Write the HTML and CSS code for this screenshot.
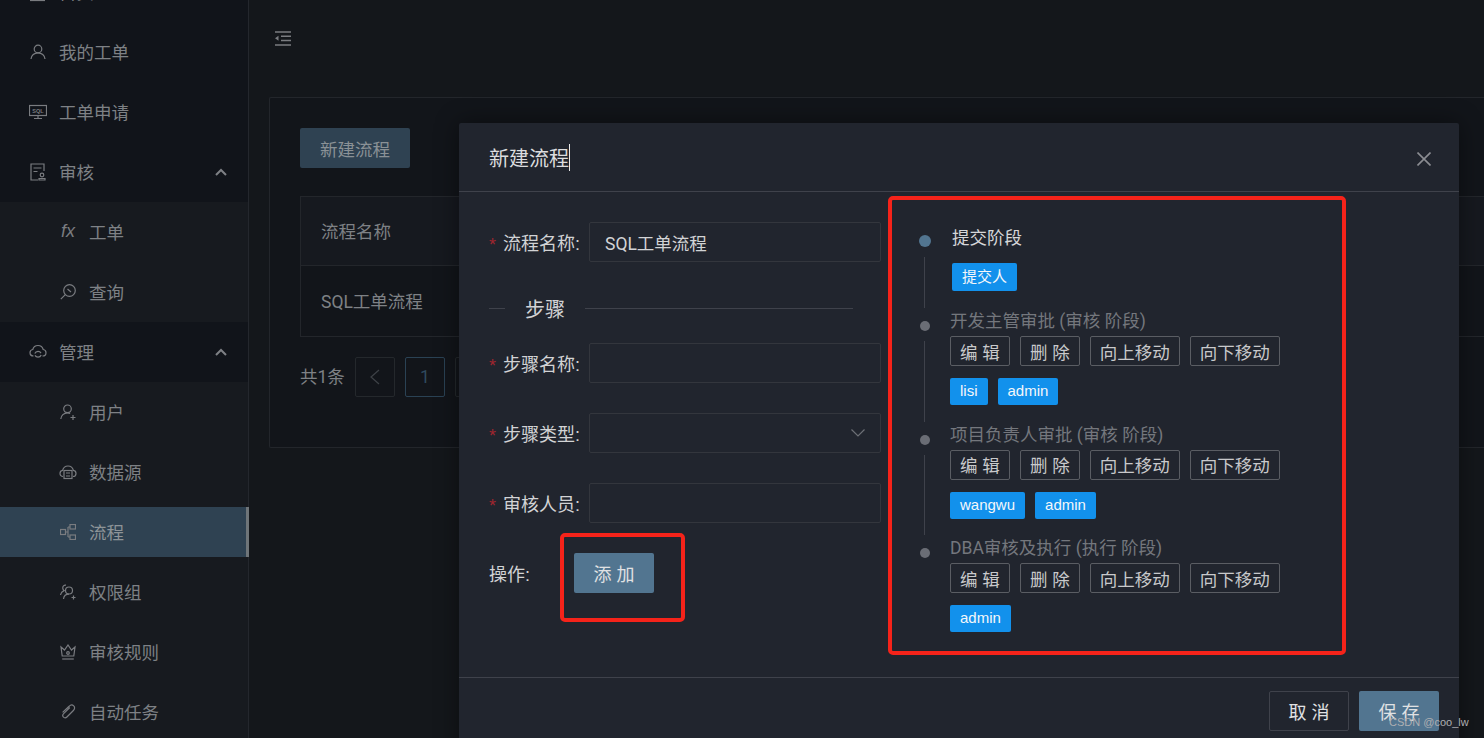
FILE: index.html
```html
<!DOCTYPE html>
<html lang="zh-CN">
<head>
  <meta charset="UTF-8">
  <title>新建流程</title>
  <link rel="stylesheet" href="styles.css">
</head>
<body>
  <div class="app">
    <aside class="sidebar">
      <nav class="menu">
        <a class="menu-item">
          <svg class="icon icon-clip" viewBox="0 0 16 20"><path d="M0 18.500h15"/></svg>
          首页
        </a>
        <a class="menu-item">
          <svg class="icon" viewBox="0 0 16 16"><circle cx="8" cy="5" r="3.800"/><path d="M1 15c.3-3.600 3.300-6.200 7-6.200s6.700 2.600 7 6.200"/></svg>
          我的工单
        </a>
        <a class="menu-item">
          <svg class="icon icon-wide" viewBox="0 0 18 14"><rect x=".5" y=".5" width="17" height="10"/><path d="M9 10.500v2.500M5 13.500h8"/><text class="sql-text" x="9" y="7.800">SQL</text></svg>
          工单申请
        </a>
        <a class="menu-item has-arrow">
          <svg class="icon icon-tall" viewBox="0 0 16 18"><path d="M14 8V1H1v16h7"/><path d="M3.500 5h8M3.500 8.500h4"/><circle cx="12" cy="12" r="1.800"/><path d="M9 17v-1.500h6V17z"/></svg>
          审核
          <svg class="arrow" viewBox="0 0 12 8"><path d="M1 7l5-5 5 5"/></svg>
        </a>
        <div class="submenu">
          <a class="menu-item"><span class="fx">fx</span>工单</a>
          <a class="menu-item">
            <svg class="icon" viewBox="0 0 16 16"><circle cx="9.500" cy="6.500" r="5.800"/><path d="M5.300 10.700L.8 15.200M7.500 5l3.500 3"/></svg>
            查询
          </a>
        </div>
        <a class="menu-item has-arrow">
          <svg class="icon icon-wide" viewBox="0 0 18 15"><path d="M4.500 11.500C2.500 11.500 1 10 1 8.200c0-1.600 1.200-3 2.800-3.200C4.400 2.600 6.500 1 9 1s4.600 1.600 5.200 4c1.600.2 2.800 1.600 2.800 3.200 0 1.800-1.500 3.300-3.500 3.300"/><path d="M5.800 9c.5-1.300 1.800-2.200 3.200-2.200 1.300 0 2.400.7 3 1.800M12.200 10.500c-.5 1.300-1.800 2.200-3.200 2.200-1.300 0-2.400-.7-3-1.800"/></svg>
          管理
          <svg class="arrow" viewBox="0 0 12 8"><path d="M1 7l5-5 5 5"/></svg>
        </a>
        <div class="submenu">
          <a class="menu-item">
            <svg class="icon" viewBox="0 0 16 16"><circle cx="7.500" cy="4.800" r="3.800"/><path d="M.8 15c.2-3.500 3.100-6.200 6.700-6.200 1 0 1.900.2 2.700.6M10.500 13.500h5M13 11v5"/></svg>
            用户
          </a>
          <a class="menu-item">
            <svg class="icon icon-wide" viewBox="0 0 18 14"><path d="M4 11.500C2.200 11.500 1 10 1 8.400c0-1.500 1.100-2.800 2.600-3C4.200 3 6.400 1 9 1s4.800 2 5.400 4.400c1.500.2 2.600 1.500 2.600 3 0 1.600-1.200 3.100-3 3.100"/><rect x="5" y="5.500" width="8" height="8"/><path d="M7 8h4M7 11h4"/></svg>
            数据源
          </a>
          <a class="menu-item active">
            <svg class="icon" viewBox="0 0 16 16"><rect x=".5" y="5.500" width="5" height="5"/><rect x="10" y=".5" width="5.500" height="4.500"/><rect x="10" y="11" width="5.500" height="4.500"/><path d="M5.500 8H8M8 3v10M8 3h2M8 13h2"/></svg>
            流程
          </a>
          <a class="menu-item">
            <svg class="icon" viewBox="0 0 16 16"><circle cx="9" cy="6.500" r="3.500"/><path d="M3.500 15c.3-2.800 2.500-4.800 5.500-4.800M11.500 13.500h4M13.500 11.500v4M6 1.200C4 .8 2.500 2.400 2.800 4.400c.1 1 .7 1.800 1.300 2.200C2 7.500.8 9 .5 11"/></svg>
            权限组
          </a>
          <a class="menu-item">
            <svg class="icon" viewBox="0 0 16 16"><path d="M1 3l3.500 3L8 1l3.500 5L15 3l-1.200 9H2.200z"/><path d="M2.200 15h11.600"/><circle cx="8" cy="9" r="1.300"/></svg>
            审核规则
          </a>
          <a class="menu-item">
            <svg class="icon" viewBox="0 0 16 16"><path d="M9.800 3.500L3.600 9.700c-1.100 1.100-1 2.600-.1 3.500s2.300.9 3.400-.2l6.500-6.500c1.600-1.600 1.500-3.500.3-4.600s-3-1.200-4.600.4L2.600 8.400"/></svg>
            自动任务
          </a>
        </div>
      </nav>
    </aside>

    <main class="main">
      <header class="topbar">
        <svg class="collapse" viewBox="0 0 16 15"><path d="M0 1h16M6 5.300h10M6 9.600h10M0 14h16"/><path class="solid" d="M3.500 4.800v5L0 7.300z"/></svg>
      </header>
      <section class="card">
        <button class="btn-new">新建流程</button>
        <div class="table">
          <div class="table-head">流程名称</div>
          <div class="table-row">SQL工单流程</div>
        </div>
        <div class="pager">
          <span class="pager-total">共1条</span>
          <span class="pager-btn"><svg viewBox="0 0 10 16"><path d="M9 1L1 8l8 7"/></svg></span>
          <span class="pager-btn current">1</span>
          <span class="pager-btn"><svg viewBox="0 0 10 16"><path d="M1 1l8 7-8 7"/></svg></span>
        </div>
      </section>
    </main>

    <div class="modal">
      <div class="modal-header">
        <span class="modal-title">新建流程</span>
        <svg class="modal-close" viewBox="0 0 14 14"><path d="M.5.500l13 13M13.500.500l-13 13"/></svg>
      </div>
      <div class="modal-body">
        <form class="flow-form">
          <div class="form-row">
            <label class="form-label"><i>*</i>流程名称:</label>
            <input class="form-input" value="SQL工单流程">
          </div>
          <div class="divider"><span>步骤</span></div>
          <div class="form-row">
            <label class="form-label"><i>*</i>步骤名称:</label>
            <input class="form-input">
          </div>
          <div class="form-row">
            <label class="form-label"><i>*</i>步骤类型:</label>
            <div class="form-input form-select">
              <svg viewBox="0 0 14 8"><path d="M.5.500L7 7l6.500-6.500"/></svg>
            </div>
          </div>
          <div class="form-row">
            <label class="form-label"><i>*</i>审核人员:</label>
            <input class="form-input">
          </div>
          <div class="form-row action-row">
            <label class="form-label plain">操作:</label>
            <button type="button" class="btn btn-primary">添 加</button>
          </div>
        </form>

        <div class="timeline">
          <div class="step first">
            <div class="rail"><span class="dot"></span><span class="rail-line"></span></div>
            <div class="step-content">
              <div class="step-title">提交阶段</div>
              <div class="tags"><span class="tag">提交人</span></div>
            </div>
          </div>
          <div class="step">
            <div class="rail"><span class="dot"></span><span class="rail-line"></span></div>
            <div class="step-content">
              <div class="step-title">开发主管审批 (审核 阶段)</div>
              <div class="step-actions">
                <button class="btn-small">编 辑</button>
                <button class="btn-small">删 除</button>
                <button class="btn-small">向上移动</button>
                <button class="btn-small">向下移动</button>
              </div>
              <div class="tags"><span class="tag">lisi</span><span class="tag">admin</span></div>
            </div>
          </div>
          <div class="step">
            <div class="rail"><span class="dot"></span><span class="rail-line"></span></div>
            <div class="step-content">
              <div class="step-title">项目负责人审批 (审核 阶段)</div>
              <div class="step-actions">
                <button class="btn-small">编 辑</button>
                <button class="btn-small">删 除</button>
                <button class="btn-small">向上移动</button>
                <button class="btn-small">向下移动</button>
              </div>
              <div class="tags"><span class="tag">wangwu</span><span class="tag">admin</span></div>
            </div>
          </div>
          <div class="step">
            <div class="rail"><span class="dot"></span></div>
            <div class="step-content">
              <div class="step-title">DBA审核及执行 (执行 阶段)</div>
              <div class="step-actions">
                <button class="btn-small">编 辑</button>
                <button class="btn-small">删 除</button>
                <button class="btn-small">向上移动</button>
                <button class="btn-small">向下移动</button>
              </div>
              <div class="tags"><span class="tag">admin</span></div>
            </div>
          </div>
        </div>
      </div>
      <div class="modal-footer">
        <button class="btn btn-default">取 消</button>
        <button class="btn btn-primary">保 存</button>
      </div>
    </div>

    <div class="watermarks" id="watermarks"></div>
    <div class="mark mark-add"></div>
    <div class="mark mark-steps"></div>
    <div class="csdn">CSDN @coo_lw</div>
  </div>

  <script>
    const watermarks = document.getElementById("watermarks");
    for (let i = 0; i < 49; i++) {
      const span = document.createElement("span");
      span.textContent = "admin";
      watermarks.appendChild(span);
    }
  </script>
</body>
</html>
```

FILE: styles.css
```css
* {
  box-sizing: border-box;
}

body {
  margin: 0;
  font-family: Roboto, "Noto Sans CJK SC", sans-serif;
  font-size: 17.500px;
  background-color: #12151a;
  color: #7e8185;
}

button,
input {
  font-family: inherit;
}

.app {
  position: relative;
  display: flex;
  width: 100%;
  height: 100vh;
  overflow: hidden;
}

/* sidebar */
.sidebar {
  flex: 0 0 249px;
  background-color: #11141a;
  border-right: 1px solid #24272d;
}

.menu {
  margin-top: -38px;
}

.menu-item {
  display: flex;
  align-items: center;
  gap: 13px;
  height: 60px;
  padding: 0 0 2px 30px;
  color: #7e8185;
}

.icon {
  flex: none;
  width: 16px;
  height: 16px;
  margin-top: 2px;
  fill: none;
  stroke: #7a7c80;
  stroke-width: 1.2;
}

.icon-wide {
  width: 18px;
  margin-left: -1px;
  margin-right: -1px;
}

.icon-tall {
  height: 18px;
}

.icon-clip {
  height: 20px;
}

.sql-text {
  font-family: "Liberation Sans", sans-serif;
  font-size: 5.500px;
  font-weight: bold;
  fill: #7a7c80;
  stroke: none;
  text-anchor: middle;
}

.arrow {
  width: 12px;
  height: 8px;
  margin-top: 2px;
  margin-left: auto;
  margin-right: 21px;
  fill: none;
  stroke: #7e8185;
  stroke-width: 2;
}

.submenu {
  background-color: #171a1f;
}

.submenu .menu-item {
  padding-left: 60px;
}

.fx {
  width: 16px;
  padding-left: 1px;
  font-family: "Liberation Sans", sans-serif;
  font-style: italic;
  font-size: 18px;
  color: #7a7c80;
}

.menu-item.active {
  height: 50px;
  margin: 5px -1px 5px 0;
  background-color: #2f4252;
  border-right: 3px solid #6f7579;
  color: #8d9498;
}

/* page behind the dialog */
.main {
  flex: 1;
  min-width: 0;
  background-color: #14171b;
}

.topbar {
  height: 97px;
  padding: 31px 0 0 26px;
}

.collapse {
  display: block;
  width: 16px;
  height: 15px;
  fill: none;
  stroke: #7a7c80;
  stroke-width: 1.500;
}

.collapse .solid {
  fill: #7a7c80;
  stroke: none;
}

.card {
  height: 351px;
  margin-left: 20px;
  padding: 30px 0 0 30px;
  background-color: #12151a;
  border: 1px solid #23262b;
  border-right: 0;
  border-radius: 2px 0 0 2px;
}

.btn-new {
  display: block;
  width: 110px;
  height: 40px;
  padding: 0;
  background-color: #2f4252;
  border: 0;
  border-radius: 2px;
  color: #8a9196;
  font-size: 17.500px;
}

.table {
  margin-top: 28px;
  border: 1px solid #23262b;
  border-right: 0;
}

.table-head {
  height: 69px;
  padding: 1px 0 0 20px;
  line-height: 69px;
  background-color: #16191f;
  border-bottom: 1px solid #23262b;
}

.table-row {
  height: 70px;
  padding: 1px 0 0 20px;
  line-height: 70px;
}

.pager {
  display: flex;
  align-items: center;
  gap: 10px;
  margin-top: 20px;
}

.pager-total {
  padding-bottom: 4px;
}

.pager-btn {
  display: flex;
  align-items: center;
  justify-content: center;
  width: 40px;
  height: 40px;
  color: #2f4a5e;
  border: 1px solid #24282c;
  border-radius: 2px;
}

.pager-btn svg {
  width: 10px;
  height: 16px;
  fill: none;
  stroke: #3e4247;
  stroke-width: 1.200;
}

.pager-btn.current {
  border-color: #2a4254;
}

/* dialog */
.modal {
  position: absolute;
  left: 459px;
  top: 123px;
  width: 1000px;
  height: 630px;
  background-color: #21252e;
  box-shadow: 0 0 24px rgba(0, 0, 0, 0.45);
  border-radius: 2px;
  color: #d2d3d5;
}

.modal-header {
  display: flex;
  align-items: center;
  justify-content: space-between;
  height: 69px;
  padding: 0 28px 0 30px;
  border-bottom: 1px solid #3f424b;
}

.modal-title {
  display: inline-block;
  height: 27px;
  line-height: 30px;
  font-size: 20px;
  color: #dcdddf;
  border-right: 1px solid #e8e8e8;
}

.modal-close {
  width: 14px;
  height: 14px;
  margin-top: 3px;
  fill: none;
  stroke: #8b8d92;
  stroke-width: 1.600;
}

.modal-body {
  display: flex;
  height: 485px;
  padding: 30px 0 0 30px;
}

.flow-form {
  flex: 0 0 392px;
}

.form-row {
  display: flex;
  align-items: center;
  height: 40px;
  margin-bottom: 30px;
}

.form-label {
  flex: 0 0 100px;
  display: flex;
  align-items: center;
  font-family: "Liberation Sans", "Noto Sans CJK SC", sans-serif;
  font-size: 18px;
  color: #d2d3d5;
}

.form-label i {
  width: 14px;
  padding-top: 6px;
  font-style: normal;
  color: #a0252e;
}

.form-input {
  flex: 1;
  height: 40px;
  min-width: 0;
  padding: 0 15px;
  background: transparent;
  border: 1px solid #33363d;
  border-radius: 2px;
  color: #d2d3d5;
  font-size: 17.500px;
}

.form-select {
  display: flex;
  align-items: center;
  justify-content: flex-end;
}

.form-select svg {
  width: 14px;
  height: 8px;
  fill: none;
  stroke: #6d7076;
  stroke-width: 1.200;
}

.divider {
  display: flex;
  align-items: center;
  width: 364px;
  height: 33px;
  margin-bottom: 18px;
  font-size: 20px;
}

.divider::before,
.divider::after {
  content: "";
  height: 1px;
  background-color: #3f424b;
}

.divider::before {
  flex: 0 0 16px;
}

.divider::after {
  flex: 1;
}

.divider span {
  padding: 0 20px;
}

.action-row .btn {
  margin-left: -15px;
}

.btn {
  width: 80px;
  height: 40px;
  padding: 0;
  border-radius: 2px;
  font-family: "Liberation Sans", "Noto Sans CJK SC", sans-serif;
  font-size: 18px;
  color: #e0e1e3;
}

.btn-primary {
  background-color: #527590;
  border: 0;
}

.btn-default {
  background: transparent;
  border: 1px solid #3f424b;
}

.modal-footer {
  display: flex;
  justify-content: flex-end;
  gap: 10px;
  padding: 13px 20px;
  border-top: 1px solid #3f424b;
}

.timeline {
  margin-left: 38px;
  padding-top: 3px;
}

.step {
  display: flex;
  gap: 19px;
  padding-bottom: 16.500px;
}

.step.first {
  gap: 21px;
  padding-bottom: 17px;
}

.rail {
  display: flex;
  flex-direction: column;
  width: 12px;
  margin-bottom: -16.500px;
}

.dot {
  width: 10px;
  height: 10px;
  margin: 13px 0 10px 1px;
  border-radius: 50%;
  background-color: #6a6d75;
}

.first .dot {
  width: 12px;
  height: 12px;
  margin: 10px 0 10px 0;
  background-color: #527590;
}

.rail-line {
  flex: 1;
  width: 1px;
  margin-left: 5px;
  background-color: #3f424b;
}

.step-title {
  height: 28px;
  line-height: 27px;
  white-space: nowrap;
  color: #74777d;
}

.first .step-title {
  height: 38px;
  line-height: 27px;
  color: #d6d7d9;
}

.step-actions {
  display: flex;
  gap: 10px;
  margin-bottom: 12px;
}

.btn-small {
  height: 30px;
  padding: 0 9px;
  background: transparent;
  border: 1px solid #5a5d63;
  border-radius: 2px;
  font-family: "Liberation Sans", "Noto Sans CJK SC", sans-serif;
  font-size: 17.500px;
  color: #c8c9cb;
  white-space: nowrap;
}

.tags {
  display: flex;
  gap: 10px;
}

.tag {
  height: 27px;
  padding: 0 10px;
  line-height: 26px;
  font-family: "Liberation Sans", "Noto Sans CJK SC", sans-serif;
  font-size: 15px;
  color: #f4f7fa;
  background-color: #1291ec;
  border-radius: 2px;
}

.first .tag {
  height: 28px;
  line-height: 27px;
}

/* things lying over the whole shot */
.watermarks {
  position: absolute;
  left: -215px;
  top: -68px;
  display: grid;
  grid-template-columns: repeat(7, 250px);
  grid-auto-rows: 125px;
  pointer-events: none;
}

.watermarks span {
  display: flex;
  align-items: center;
  justify-content: center;
  font-family: "Liberation Sans", sans-serif;
  font-size: 27px;
  color: rgba(255, 255, 255, 0.022);
  transform: rotate(-20deg);
}

.mark {
  position: absolute;
  border: 4px solid #f5231a;
  border-radius: 5px;
}

.mark-add {
  left: 560px;
  top: 533px;
  width: 125px;
  height: 89px;
}

.mark-steps {
  left: 888px;
  top: 196px;
  width: 458px;
  height: 459px;
}

.csdn {
  position: absolute;
  left: 1389px;
  top: 716px;
  font-family: "Liberation Sans", sans-serif;
  font-size: 11px;
  color: #aeafb2;
}
```
